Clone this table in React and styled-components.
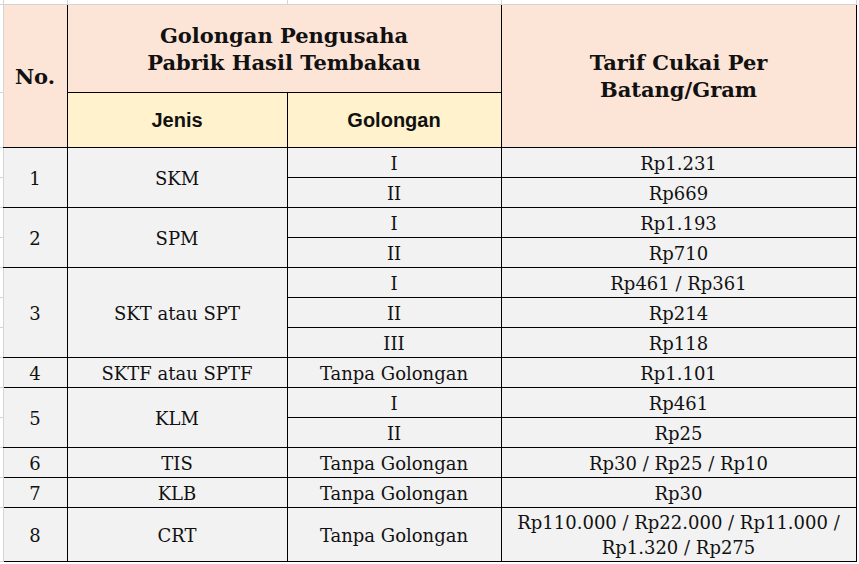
import React from 'react';
import styled, { createGlobalStyle } from 'styled-components';

const GlobalStyle = createGlobalStyle`
  html, body {
    margin: 0;
    padding: 0;
    background: #fff;
  }
`;

const Sheet = styled.div`
  width: 859px;
  height: 564px;
  overflow: hidden;
  background: #fff;
`;

const Table = styled.table`
  border-collapse: collapse;
  table-layout: fixed;
  width: 856px;
  font-family: "DejaVu Serif", Georgia, serif;
  color: #111;
`;

const Gutter = styled.td`
  padding: 0;
  border: 1px solid #d4d4d4;
  border-left: none;
  border-top: none;
`;

const StripCell = styled.td`
  height: 4px;
  padding: 0;
  border-right: 1px solid #d4d4d4;
  border-bottom: 1px solid #d4d4d4;
`;

const tones = {
  peach: '#fce4d6',
  cream: '#fff2cc',
};

const HeadCell = styled.th`
  padding: 0;
  background: ${p => tones[p.$tone]};
  border: 1px solid #000;
  border-top-color: #d4d4d4;
  font-family: ${p => (p.$sans ? '"Liberation Sans", Arial, sans-serif' : '"DejaVu Serif", Georgia, serif')};
  font-size: ${p => (p.$sans ? '20px' : '21px')};
  font-weight: 700;
  line-height: 27px;
  text-align: center;
  vertical-align: middle;
  height: ${p => p.$h || 'auto'};
`;

const Cell = styled.td`
  padding: 1px 0 0;
  background: #f2f2f2;
  border: 1px solid #000;
  font-size: 18px;
  line-height: 25px;
  text-align: center;
  vertical-align: middle;
  height: ${p => (p.$tall ? '52px' : '28px')};
  white-space: nowrap;
`;

const NoCell = styled(Cell)`
  border-left-color: #d4d4d4;
`;

const rows = [
  { no: 1, jenis: 'SKM', items: [['I', 'Rp1.231'], ['II', 'Rp669']] },
  { no: 2, jenis: 'SPM', items: [['I', 'Rp1.193'], ['II', 'Rp710']] },
  { no: 3, jenis: 'SKT atau SPT', items: [['I', 'Rp461 / Rp361'], ['II', 'Rp214'], ['III', 'Rp118']] },
  { no: 4, jenis: 'SKTF atau SPTF', items: [['Tanpa Golongan', 'Rp1.101']] },
  { no: 5, jenis: 'KLM', items: [['I', 'Rp461'], ['II', 'Rp25']] },
  { no: 6, jenis: 'TIS', items: [['Tanpa Golongan', 'Rp30 / Rp25 / Rp10']] },
  { no: 7, jenis: 'KLB', items: [['Tanpa Golongan', 'Rp30']] },
  {
    no: 8,
    jenis: 'CRT',
    tall: true,
    items: [['Tanpa Golongan', <>Rp110.000 / Rp22.000 / Rp11.000 /<br />Rp1.320 / Rp275</>]],
  },
];

const App = () => {
  return (
    <Sheet>
      <GlobalStyle />
      <Table>
        <colgroup>
          <col style={{ width: 3 }} />
          <col style={{ width: 64 }} />
          <col style={{ width: 220 }} />
          <col style={{ width: 214 }} />
          <col style={{ width: 355 }} />
        </colgroup>
        <tbody>
          <tr>
            <Gutter />
            <StripCell />
            <StripCell />
            <StripCell />
            <StripCell />
          </tr>
          <tr>
            <Gutter />
            <HeadCell $tone="peach" rowSpan={2} style={{ borderLeftColor: '#d4d4d4' }}>No.</HeadCell>
            <HeadCell $tone="peach" colSpan={2} $h="87px">
              Golongan Pengusaha<br />Pabrik Hasil Tembakau
            </HeadCell>
            <HeadCell $tone="peach" rowSpan={2}>
              Tarif Cukai Per<br />Batang/Gram
            </HeadCell>
          </tr>
          <tr>
            <Gutter />
            <HeadCell $tone="cream" $sans $h="54px">Jenis</HeadCell>
            <HeadCell $tone="cream" $sans>Golongan</HeadCell>
          </tr>
          {rows.map(row =>
            row.items.map(([gol, tarif], i) => (
              <tr key={`${row.no}-${i}`}>
                <Gutter />
                {i === 0 && (
                  <>
                    <NoCell rowSpan={row.items.length} $tall={row.tall}>{row.no}</NoCell>
                    <Cell rowSpan={row.items.length} $tall={row.tall}>{row.jenis}</Cell>
                  </>
                )}
                <Cell $tall={row.tall}>{gol}</Cell>
                <Cell $tall={row.tall}>{tarif}</Cell>
              </tr>
            ))
          )}
        </tbody>
      </Table>
    </Sheet>
  );
};

export default App;
